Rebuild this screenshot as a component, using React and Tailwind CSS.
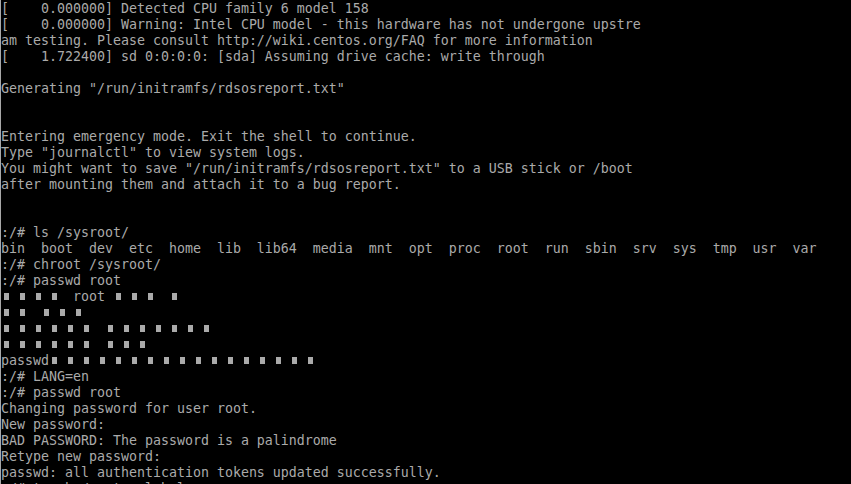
import React from 'react';

const lines = [
  '[    0.000000] Detected CPU family 6 model 158',
  '[    0.000000] Warning: Intel CPU model - this hardware has not undergone upstre',
  'am testing. Please consult http://wiki.centos.org/FAQ for more information',
  '[    1.722400] sd 0:0:0:0: [sda] Assuming drive cache: write through',
  '',
  'Generating "/run/initramfs/rdsosreport.txt"',
  '',
  '',
  'Entering emergency mode. Exit the shell to continue.',
  'Type "journalctl" to view system logs.',
  'You might want to save "/run/initramfs/rdsosreport.txt" to a USB stick or /boot',
  'after mounting them and attach it to a bug report.',
  '',
  '',
  ':/# ls /sysroot/',
  'bin  boot  dev  etc  home  lib  lib64  media  mnt  opt  proc  root  run  sbin  srv  sys  tmp  usr  var',
  ':/# chroot /sysroot/',
  ':/# passwd root',
  '■■■■ root ■■■ ■',
  '■■ ■■■',
  '■■■■■■ ■■■■■■■',
  '■■■■■■ ■■■',
  'passwd■■■■■■■■■■■■■■■■■',
  ':/# LANG=en',
  ':/# passwd root',
  'Changing password for user root.',
  'New password:',
  'BAD PASSWORD: The password is a palindrome',
  'Retype new password:',
  'passwd: all authentication tokens updated successfully.',
  ':/# touch /.autorelabel',
];

// missing CJK glyph, drawn by the console as a small box in a double-width cell
const Blk = () => (
  <span className="inline-block w-4 h-4 align-top pt-[4px] pl-[3px]">
    <span className="block w-[5px] h-[7px] bg-[#aaaaaa]" />
  </span>
);

const Line = ({ text }) => {
  const parts = text.split(/(■)/).filter((p) => p !== '');
  return (
    <div className="h-4 leading-4 whitespace-pre">
      {parts.map((p, i) => (p === '■' ? <Blk key={i} /> : <span key={i}>{p}</span>))}
    </div>
  );
};

const App = () => {
  return (
    <div className="h-[484px] w-full overflow-hidden bg-black border-l border-[#a8a8a8] pt-px text-[#aaaaaa] font-['DejaVu_Sans_Mono',monospace] text-[13.29px]">
      {lines.map((l, i) => (
        <Line key={i} text={l} />
      ))}
    </div>
  );
};

export default App;
